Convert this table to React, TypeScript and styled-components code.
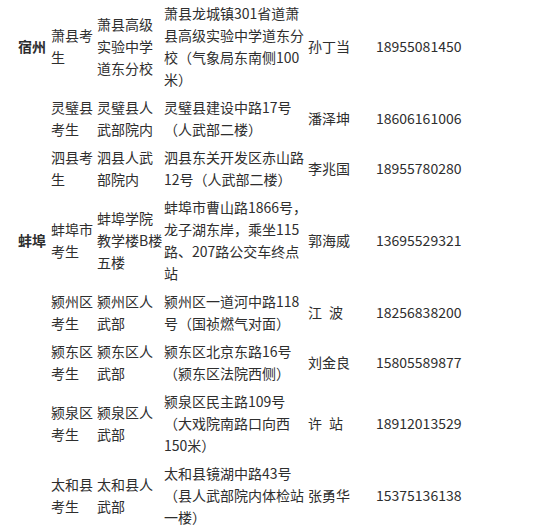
import React from "react";
import styled, { createGlobalStyle } from "styled-components";

type Entry = {
  city?: { name: string; span: number };
  group: string[];
  site: string[];
  address: string[];
  contact: string;
  phone: string;
};

const entries: Entry[] = [
  {
    city: { name: "宿州", span: 1 },
    group: ["萧县考", "生"],
    site: ["萧县高级", "实验中学", "道东分校"],
    address: ["萧县龙城镇301省道萧", "县高级实验中学道东分", "校（气象局东南侧100", "米）"],
    contact: "孙丁当",
    phone: "18955081450",
  },
  {
    city: { name: "", span: 2 },
    group: ["灵璧县", "考生"],
    site: ["灵璧县人", "武部院内"],
    address: ["灵璧县建设中路17号", "（人武部二楼）"],
    contact: "潘泽坤",
    phone: "18606161006",
  },
  {
    group: ["泗县考", "生"],
    site: ["泗县人武", "部院内"],
    address: ["泗县东关开发区赤山路", "12号（人武部二楼）"],
    contact: "李兆国",
    phone: "18955780280",
  },
  {
    city: { name: "蚌埠", span: 1 },
    group: ["蚌埠市", "考生"],
    site: ["蚌埠学院", "教学楼B楼", "五楼"],
    address: ["蚌埠市曹山路1866号，", "龙子湖东岸，乘坐115", "路、207路公交车终点", "站"],
    contact: "郭海威",
    phone: "13695529321",
  },
  {
    city: { name: "", span: 4 },
    group: ["颍州区", "考生"],
    site: ["颍州区人", "武部"],
    address: ["颍州区一道河中路118", "号（国祯燃气对面）"],
    contact: "江\u2002波",
    phone: "18256838200",
  },
  {
    group: ["颍东区", "考生"],
    site: ["颍东区人", "武部"],
    address: ["颍东区北京东路16号", "（颍东区法院西侧）"],
    contact: "刘金良",
    phone: "15805589877",
  },
  {
    group: ["颍泉区", "考生"],
    site: ["颍泉区人", "武部"],
    address: ["颍泉区民主路109号", "（大戏院南路口向西", "150米）"],
    contact: "许\u2002站",
    phone: "18912013529",
  },
  {
    group: ["太和县", "考生"],
    site: ["太和县人", "武部"],
    address: ["太和县镜湖中路43号", "（县人武部院内体检站", "一楼）"],
    contact: "张勇华",
    phone: "15375136138",
  },
];

const GlobalStyle = createGlobalStyle`
  html, body {
    margin: 0;
    padding: 0;
    background: #ffffff;
  }
`;

const Page = styled.div`
  width: 547px;
  height: 529px;
  overflow: hidden;
  font-family: "Microsoft YaHei", "Noto Sans CJK SC", "Noto Sans", sans-serif;
  font-size: 14px;
  line-height: 22px;
  color: #2e2e2e;
`;

const Table = styled.table`
  margin-top: -1px;
  border-collapse: collapse;
  table-layout: fixed;
  width: 547px;
`;

const Col = styled.col<{ $width: number }>`
  width: ${(p) => p.$width}px;
`;

const Cell = styled.td`
  padding: 3px 2px;
  vertical-align: middle;
  text-align: left;
  white-space: nowrap;
`;

const CityCell = styled(Cell)`
  padding-left: 18px;
  font-weight: bold;
`;

const Lines: React.FC<{ lines: string[] }> = ({ lines }) => (
  <>
    {lines.map((line, i) => (
      <React.Fragment key={i}>
        {i > 0 && <br />}
        {line}
      </React.Fragment>
    ))}
  </>
);

const App: React.FC = () => {
  return (
    <Page>
      <GlobalStyle />
      <Table>
        <colgroup>
          <Col $width={49} />
          <Col $width={46} />
          <Col $width={67} />
          <Col $width={144} />
          <Col $width={68} />
          <Col $width={173} />
        </colgroup>
        <tbody>
          {entries.map((e, i) => (
            <tr key={i}>
              {e.city && <CityCell rowSpan={e.city.span}>{e.city.name}</CityCell>}
              <Cell>
                <Lines lines={e.group} />
              </Cell>
              <Cell>
                <Lines lines={e.site} />
              </Cell>
              <Cell>
                <Lines lines={e.address} />
              </Cell>
              <Cell>{e.contact}</Cell>
              <Cell>{e.phone}</Cell>
            </tr>
          ))}
        </tbody>
      </Table>
    </Page>
  );
};

export default App;
